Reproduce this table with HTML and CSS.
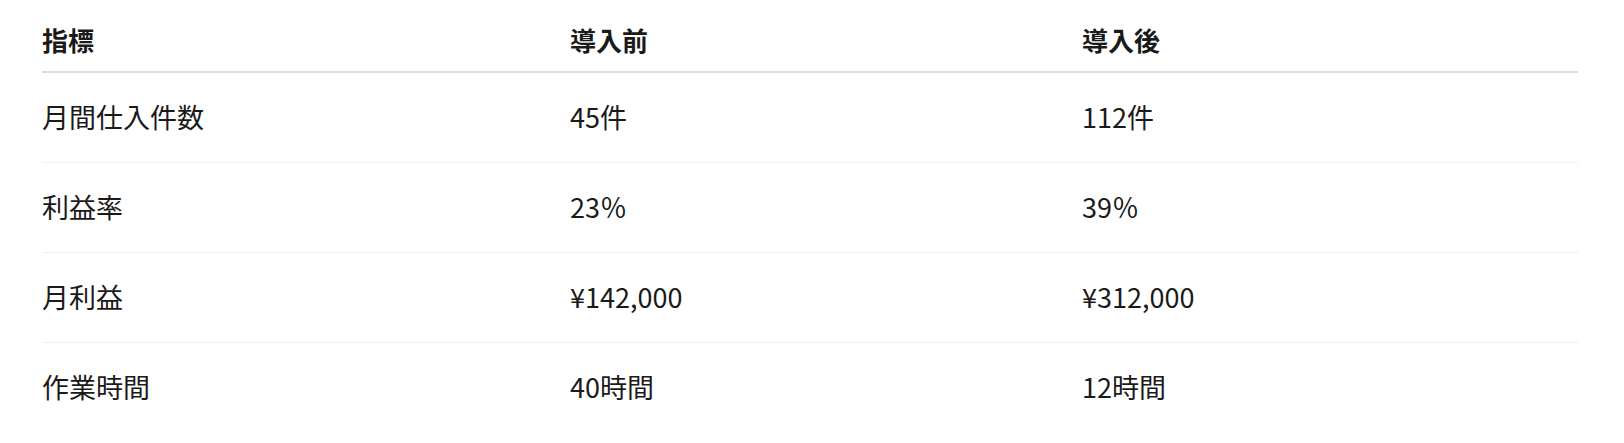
FILE: index.html
```html
<!DOCTYPE html>
<html lang="ja">
<head>
<meta charset="utf-8">
<link rel="stylesheet" href="styles.css">
</head>
<body>
<div class="wrap">
  <table class="cmp">
    <thead>
      <tr><th>指標</th><th>導入前</th><th>導入後</th></tr>
    </thead>
    <tbody>
      <tr><td>月間仕入件数</td><td>45件</td><td>112件</td></tr>
      <tr><td>利益率</td><td>23％</td><td>39％</td></tr>
      <tr><td>月利益</td><td>¥142,000</td><td>¥312,000</td></tr>
      <tr><td>作業時間</td><td>40時間</td><td>12時間</td></tr>
    </tbody>
  </table>
</div>
</body>
</html>
```

FILE: styles.css
```css
html, body {
  margin: 0;
  padding: 0;
  background: #ffffff;
}
body {
  font-family: "Noto Sans CJK JP", "Noto Sans", sans-serif;
  color: #1a1a1a;
}
.wrap {
  padding: 0 46px 0 42px;
}
.cmp {
  width: 100%;
  border-collapse: collapse;
  table-layout: fixed;
  font-size: 27px;
  line-height: 39px;
}
.cmp th:nth-child(1), .cmp td:nth-child(1) { width: 528px; }
.cmp th:nth-child(2), .cmp td:nth-child(2) { width: 512px; }
.cmp th {
  text-align: left;
  font-weight: 700;
  font-size: 26px;
  padding: 20px 0 12px;
  border-bottom: 2px solid #dcdcdc;
}
.cmp td {
  padding: 24px 0 26px;
  border-bottom: 1px solid #efefef;
}
.cmp tbody tr:last-child td {
  border-bottom: none;
}
```
